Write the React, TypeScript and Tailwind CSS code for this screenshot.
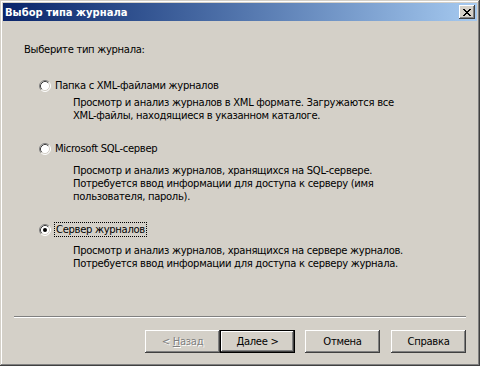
import React from 'react';

const Radio: React.FC<{ checked?: boolean }> = ({ checked }) => (
    <svg width="12" height="12" viewBox="0 0 12 12" className="shrink-0">
        <circle cx="6" cy="6" r="5" fill="#ffffff" />
        <path d="M2.11 9.89 A5.5 5.5 0 0 1 9.89 2.11" fill="none" stroke="#808080" strokeWidth="1" />
        <path d="M9.89 2.11 A5.5 5.5 0 0 1 2.11 9.89" fill="none" stroke="#ffffff" strokeWidth="1" />
        <path d="M2.82 9.18 A4.5 4.5 0 0 1 9.18 2.82" fill="none" stroke="#404040" strokeWidth="1" />
        <path d="M9.18 2.82 A4.5 4.5 0 0 1 2.82 9.18" fill="none" stroke="#d4d0c8" strokeWidth="1" />
        {checked && <circle cx="6" cy="6" r="2" fill="#000000" />}
    </svg>
);

const CloseGlyph = () => {
    const rows = ['XX....XX', '.XX..XX.', '..XXXX..', '...XX...', '..XXXX..', '.XX..XX.', 'XX....XX'];
    return (
        <svg width="8" height="7" viewBox="0 0 8 7" shapeRendering="crispEdges">
            {rows.map((r, y) =>
                r.split('').map((c, x) => (c === 'X' ? <rect key={`${x}-${y}`} x={x} y={y} width="1" height="1" fill="#000" /> : null))
            )}
        </svg>
    );
};

const bevel = 'shadow-[inset_-1px_-1px_#404040,inset_1px_1px_#ffffff,inset_-2px_-2px_#808080,inset_2px_2px_#d4d0c8]';

export default function App() {
    return (
        <div
            className="w-[480px] h-[366px] bg-[#d4d0c8] p-[3px] flex flex-col text-black text-[10px] leading-[13px] shadow-[inset_-1px_-1px_#404040,inset_1px_1px_#d4d0c8,inset_-2px_-2px_#808080,inset_2px_2px_#ffffff]"
            style={{ fontFamily: '"DejaVu Sans", "Liberation Sans", sans-serif' }}
        >
            {/* Title bar */}
            <div className="h-[18px] flex items-center justify-between pl-[2px] pr-[2px] bg-gradient-to-r from-[#0a246a] to-[#a6caf0]">
                <span className="text-white font-bold text-[10px] leading-[13px]">Выбор типа журнала</span>
                <div className={`w-[16px] h-[14px] bg-[#d4d0c8] flex items-center justify-center ${bevel}`}>
                    <CloseGlyph />
                </div>
            </div>

            {/* Body */}
            <div className="flex-1 flex flex-col tracking-[-0.3px]">
                <div className="pl-[21px] pt-[22px]">
                    <div>Выберите тип журнала:</div>

                    <div className="mt-[23px] ml-[15px] flex items-center h-[13px]">
                        <Radio />
                        <span className="ml-[4px]">Папка с XML-файлами журналов</span>
                    </div>
                    <div className="mt-[4px] ml-[49px]">
                        Просмотр и анализ журналов в XML формате. Загружаются все
                        <br />
                        XML-файлы, находящиеся в указанном каталоге.
                    </div>

                    <div className="mt-[20px] ml-[15px] flex items-center h-[13px]">
                        <Radio />
                        <span className="ml-[4px]">Microsoft SQL-сервер</span>
                    </div>
                    <div className="mt-[9px] ml-[49px]">
                        Просмотр и анализ журналов, хранящихся на SQL-сервере.
                        <br />
                        Потребуется ввод информации для доступа к серверу (имя
                        <br />
                        пользователя, пароль).
                    </div>

                    <div className="mt-[20px] ml-[15px] flex items-center h-[13px]">
                        <Radio checked />
                        <span className="ml-[3px] px-[1px] border border-dotted border-black leading-[13px]">Сервер журналов</span>
                    </div>
                    <div className="mt-[8px] ml-[49px]">
                        Просмотр и анализ журналов, хранящихся на сервере журналов.
                        <br />
                        Потребуется ввод информации для доступа к серверу журнала.
                    </div>
                </div>

                <div className="flex-1" />

                <div className="mx-[11px] h-[2px] border-t border-t-[#808080] border-b border-b-white" />

                <div className="mt-[12px] mb-[10px] mr-[11px] flex justify-end">
                    <div className={`w-[75px] h-[23px] flex items-center justify-center ${bevel}`}>
                        <span className="text-[#808080] [text-shadow:1px_1px_0_#ffffff]">
                            &lt; <u>Н</u>азад
                        </span>
                    </div>
                    <div className="w-[75px] h-[23px] border border-black">
                        <div className={`w-full h-full flex items-center justify-center ${bevel}`}>
                            <span>
                                <u>Д</u>алее &gt;
                            </span>
                        </div>
                    </div>
                    <div className={`ml-[10px] w-[75px] h-[23px] flex items-center justify-center ${bevel}`}>Отмена</div>
                    <div className={`ml-[11px] w-[75px] h-[23px] flex items-center justify-center ${bevel}`}>Справка</div>
                </div>
            </div>
        </div>
    );
}
